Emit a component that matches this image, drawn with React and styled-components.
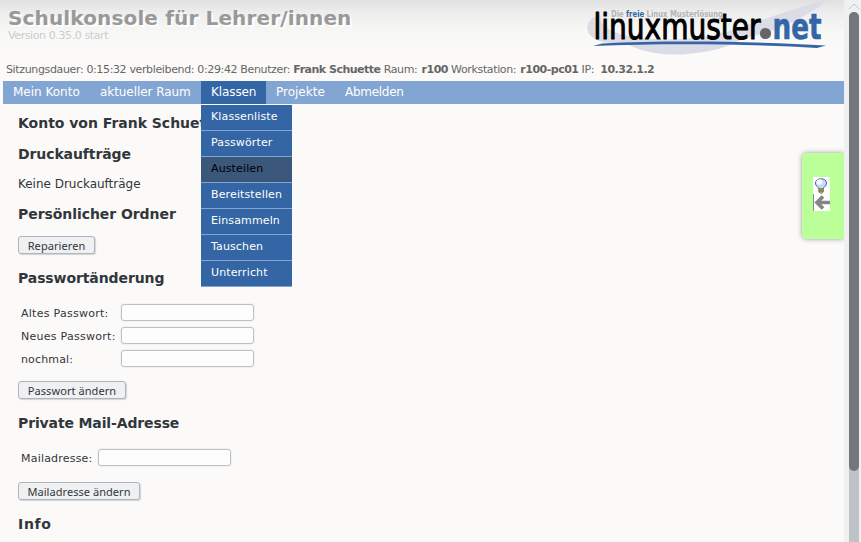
import React from "react";
import styled, { createGlobalStyle } from "styled-components";

const Global = createGlobalStyle`
  * { box-sizing: border-box; }
  html, body { margin: 0; padding: 0; overflow: hidden; background: #fbfaf8; }
  body { font-family: "DejaVu Sans", Verdana, sans-serif; color: #31363b; }
`;

const Window = styled.div`
  display: flex;
  width: 861px;
  height: 542px;
  overflow: hidden;
`;

const Page = styled.div`
  position: relative;
  width: 844px;
  height: 542px;
  overflow: hidden;
  background: linear-gradient(#e0e0e0 0, #ededed 12px, #f8f8f7 34px, #fbfaf8 45px);
`;

const Header = styled.header`
  display: flex;
  justify-content: space-between;
  height: 62px;
  padding: 0 14px 0 8px;
`;

const Title = styled.h1`
  margin: 6px 0 0;
  font-size: 20px;
  line-height: 24px;
  letter-spacing: 0.14px;
  color: #999;
  text-shadow: 2px 2px 1px #fff;
  white-space: nowrap;
`;

const Version = styled.div`
  font-size: 11px;
  line-height: 13px;
  margin-top: -1px;
  letter-spacing: -0.4px;
  color: #ccc;
`;

const Status = styled.div`
  height: 19px;
  padding-left: 6px;
  font-size: 11px;
  line-height: 15px;
  letter-spacing: -0.36px;
  color: #666;
  white-space: nowrap;
`;

const Value = styled.b`
  margin-left: ${(p) => p.$gap || 0}px;
  letter-spacing: -0.5px;
`;

const Nav = styled.nav`
  display: flex;
  height: 23px;
  margin-left: 3px;
  background: #83a5d3;
`;

const NavItem = styled.div`
  position: relative;
  width: ${(p) => p.$w}px;
  padding-left: 10px;
  font-size: 12px;
  line-height: 22px;
  color: #fff;
  letter-spacing: ${(p) => p.$track || 0}px;
  white-space: nowrap;
  background: ${(p) => (p.$active ? "#3465a4" : "transparent")};
`;

const Menu = styled.div`
  position: absolute;
  z-index: 2;
  top: 24px;
  left: 0;
  width: 91px;
`;

const MenuItem = styled.div`
  height: 26px;
  padding-left: 10px;
  font-size: 11px;
  line-height: 23px;
  letter-spacing: 0.13px;
  border-bottom: 1px solid #83a5d3;
  color: ${(p) => (p.$hover ? "#000" : "#fff")};
  background: ${(p) => (p.$hover ? "#3b5779" : "#3465a4")};
`;

const Content = styled.main`
  padding: 9px 0 0 18px;
`;

const Heading = styled.h2`
  margin: 0 0 ${(p) => p.$gap}px;
  font-size: 14px;
  line-height: 20px;
  letter-spacing: ${(p) => p.$track ?? -0.1}px;
  white-space: nowrap;
`;

const Paragraph = styled.p`
  margin: 0 0 10px;
  font-size: 12px;
  line-height: 20px;
  letter-spacing: -0.02px;
`;

const Button = styled.button`
  display: block;
  width: ${(p) => p.$w}px;
  height: 18px;
  margin: 0 0 ${(p) => p.$gap}px;
  padding: 0;
  border: 1px solid #afb5ba;
  border-radius: 3px;
  background: #eff0f1;
  box-shadow: 1px 1px 1px #d2d3d4;
  color: #31363b;
  font: 11px/17px "Noto Sans", sans-serif;
  letter-spacing: ${(p) => p.$track || 0}px;
  white-space: nowrap;
`;

const Field = styled.label`
  display: flex;
  align-items: center;
  height: 23px;
  padding-left: 3px;
  font-size: 11px;
`;

const Caption = styled.span`
  width: ${(p) => p.$w}px;
  padding-top: 2px;
  letter-spacing: ${(p) => p.$track}px;
  white-space: nowrap;
`;

const Input = styled.input`
  width: 133px;
  height: 17px;
  padding: 0 3px;
  border: 1px solid #bcc1c5;
  border-radius: 3px;
  outline: 0;
  background: #fdfdfd;
  box-shadow: 0 0 0 1px #f1f2f3;
`;

const Fields = styled.div`
  margin-bottom: ${(p) => p.$gap}px;
`;

const HelpTab = styled.aside`
  position: absolute;
  top: 153px;
  right: 0;
  display: flex;
  width: 42px;
  height: 86px;
  padding: 24px 0 0 11px;
  border-radius: 5px 0 0 5px;
  background: #bbff99;
  box-shadow: 0 0 5px #999;
`;

const Scrollbar = styled.div`
  display: flex;
  flex-direction: column;
  align-items: center;
  width: 17px;
  padding-left: 2px;
  background: #eff0f1;
`;

const Arrow = styled.svg`
  flex: none;
  width: 14px;
  height: 12px;
`;

const Track = styled.div`
  width: 10px;
  height: 530px;
  border-radius: 5px 5px 0 0;
  background: #bdc3c7;
`;

const Thumb = styled.div`
  width: 10px;
  height: 459px;
  border-radius: 5px;
  background: #75767b;
`;

const LogoSvg = styled.svg`
  flex: none;
  width: 250px;
  height: 60px;
  overflow: visible;
`;

function Logo() {
  return (
    <LogoSvg viewBox="580 0 250 60">
      <path
        d="M600 15C589 17 583 28 591 36C600 45 617 43 626 43C640 52 662 56 687 54C713 52 731 46 742 39C773 32 807 18 827 0C796 7 755 23 729 31C693 42 644 41 624 35C609 31 599 24 601 17Z"
        fill="#dcdce6"
      />
      <text x="593.5" y="38.7" fontSize="35.5" fontFamily="DejaVu Sans, sans-serif" fill="#000" stroke="#000" strokeWidth="1.1" strokeLinejoin="round" textLength="167" lengthAdjust="spacingAndGlyphs">
        linuxmuster
      </text>
      <text x="611" y="16.5" fontSize="8" fontWeight="bold" fontFamily="DejaVu Sans, sans-serif" fill="#b4b4b6" textLength="112" lengthAdjust="spacingAndGlyphs">
        Die <tspan fill="#3465a4">freie</tspan> Linux Musterlösung
      </text>
      <circle cx="765.5" cy="33.5" r="5.6" fill="#666" />
      <text x="772.5" y="38.7" fontSize="35" fontWeight="bold" fontFamily="DejaVu Sans, sans-serif" fill="#3465a4" stroke="#3465a4" strokeWidth=".6" strokeLinejoin="round" textLength="49" lengthAdjust="spacingAndGlyphs">
        net
      </text>
      <path d="M593 46L602 43.5C662 40.5 752 41 826 45.5L817 48C755 44 666 43 593 46Z" fill="#3465a4" />
    </LogoSvg>
  );
}

function HelpIcon() {
  return (
    <svg width="17" height="34" viewBox="0 0 17 34">
      <rect width="17" height="34" fill="#fff" />
      <path d="M6 12C5.5 10 2.3 9 2.3 5.9A5.8 5 0 0 1 13.7 5.9C13.7 9 10.5 10 10 12Z" fill="#c5d9f4" stroke="#4665a3" />
      <ellipse cx="6.5" cy="5" rx="3" ry="2.7" fill="#f4f9ff" />
      <path d="M5.8 12.2h4.7v2.5L9 16.2H7.2L5.8 14.8Z" fill="#d9c34d" stroke="#6b6531" strokeWidth=".8" />
      <path d="M6 14h4" stroke="#514f3b" />
      <path d="M.5 17v17" stroke="#888" />
      <path d="M17 25.5H5M10 19.5l-6 6 6 6" fill="none" stroke="#858585" strokeWidth="3.7" />
    </svg>
  );
}

export default function App() {
  return (
    <>
      <Global />
      <Window>
        <Page>
          <Header>
            <div>
              <Title>Schulkonsole für Lehrer/innen</Title>
              <Version>Version 0.35.0 start</Version>
            </div>
            <Logo />
          </Header>
          <Status>
            Sitzungsdauer: 0:15:32 verbleibend: 0:29:42 Benutzer: <Value>Frank Schuette</Value> Raum: <Value $gap={1}>r100</Value> Workstation: <Value $gap={1}>r100-pc01</Value> IP: <Value $gap={3}>10.32.1.2</Value>
          </Status>
          <Nav>
            <NavItem $w={87}>Mein Konto</NavItem>
            <NavItem $w={111} $track={-0.06}>aktueller Raum</NavItem>
            <NavItem $w={65} $active $track={-0.1}>
              Klassen
              <Menu>
                <MenuItem>Klassenliste</MenuItem>
                <MenuItem>Passwörter</MenuItem>
                <MenuItem $hover>Austeilen</MenuItem>
                <MenuItem>Bereitstellen</MenuItem>
                <MenuItem>Einsammeln</MenuItem>
                <MenuItem>Tauschen</MenuItem>
                <MenuItem>Unterricht</MenuItem>
              </Menu>
            </NavItem>
            <NavItem $w={69}>Projekte</NavItem>
            <NavItem $w={80} $track={-0.28}>Abmelden</NavItem>
          </Nav>
          <Content>
            <Heading $gap={11} $track={-0.02}>Konto von Frank Schuette</Heading>
            <Heading $gap={10}>Druckaufträge</Heading>
            <Paragraph>Keine Druckaufträge</Paragraph>
            <Heading $gap={12} $track={-0.06}>Persönlicher Ordner</Heading>
            <Button $w={77} $gap={14} $track={0.07}>Reparieren</Button>
            <Heading $gap={13}>Passwortänderung</Heading>
            <Fields $gap={11}>
              <Field><Caption $w={100} $track={0.27}>Altes Passwort:</Caption><Input type="password" /></Field>
              <Field><Caption $w={100} $track={0.27}>Neues Passwort:</Caption><Input type="password" /></Field>
              <Field><Caption $w={100} $track={0.15}>nochmal:</Caption><Input type="password" /></Field>
            </Fields>
            <Button $w={108} $gap={14} $track={0.07}>Passwort ändern</Button>
            <Heading $gap={13} $track={-0.13}>Private Mail-Adresse</Heading>
            <Fields $gap={13}>
              <Field><Caption $w={77} $track={0.2}>Mailadresse:</Caption><Input /></Field>
            </Fields>
            <Button $w={122} $gap={14} $track={0.05}>Mailadresse ändern</Button>
            <Heading $gap={0} $track={0.7}>Info</Heading>
          </Content>
          <HelpTab><HelpIcon /></HelpTab>
        </Page>
        <Scrollbar>
          <Arrow viewBox="0 0 14 12"><path d="M2 9l5-5 5 5" fill="none" stroke="#c5c8ca" /></Arrow>
          <Track><Thumb /></Track>
        </Scrollbar>
      </Window>
    </>
  );
}
